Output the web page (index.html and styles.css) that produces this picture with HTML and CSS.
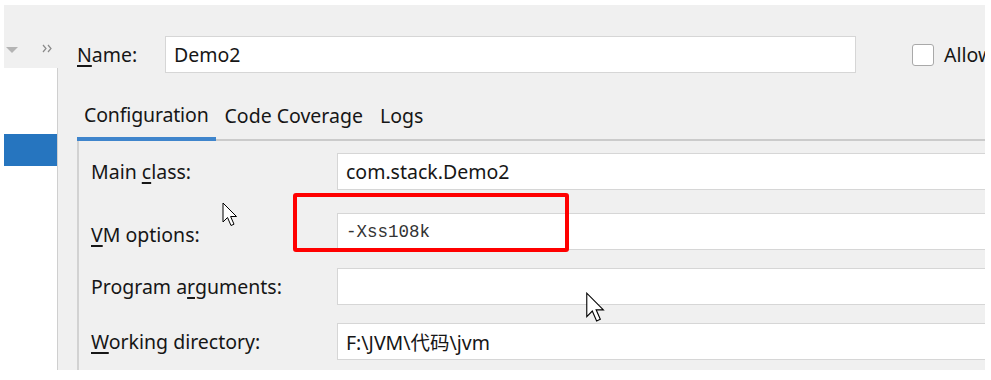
FILE: index.html
```html
<!DOCTYPE html>
<html>
<head>
<meta charset="utf-8">
<link rel="stylesheet" href="styles.css">
</head>
<body>
<div class="window">
  <div class="side">
    <div class="side-tools">
      <svg class="tri" width="12" height="7" viewBox="0 0 12 7"><path d="M0 0 H12 L6 6 Z" fill="#b4b4b4"/></svg>
      <svg class="chev" width="11" height="9" viewBox="0 0 11 9"><path d="M1 1 L4 4.5 L1 8 M6 1 L9 4.5 L6 8" fill="none" stroke="#8a8a8a" stroke-width="1.2"/></svg>
    </div>
    <div class="side-list">
      <div class="side-sel"></div>
    </div>
  </div>
  <div class="main">
    <div class="name-row">
      <label class="lbl-name"><u>N</u>ame:</label>
      <div class="field name-field">Demo2</div>
      <span class="check"></span>
      <span class="allow">Allow</span>
    </div>
    <div class="tabs">
      <div class="tab active">Configuration</div>
      <div class="tab">Code Coverage</div>
      <div class="tab">Logs</div>
    </div>
    <div class="panel">
      <div class="row first">
        <label class="lbl">Main <u>c</u>lass:</label>
        <div class="field">com.stack.Demo2</div>
      </div>
      <div class="row vm">
        <label class="lbl"><u>V</u>M options:</label>
        <div class="field mono">-Xss108k</div>
      </div>
      <div class="row">
        <label class="lbl">Program a<u>r</u>guments:</label>
        <div class="field"></div>
      </div>
      <div class="row">
        <label class="lbl"><u>W</u>orking directory:</label>
        <div class="field">F:\JVM\代码\jvm</div>
      </div>
    </div>
  </div>
</div>
<div class="highlight"></div>
<svg class="cursor c1" width="17" height="26" viewBox="0 0 17 26"><path d="M1 1 V20 L5.5 15.5 L9 23.5 L12 22.2 L8.6 14.5 L14.5 14.5 Z" fill="#fff" stroke="#000" stroke-width="1" stroke-linejoin="miter"/></svg>
<svg class="cursor c2" width="22" height="32" viewBox="0 0 17 26"><path d="M1 1 V20 L5.5 15.5 L9 23.5 L12 22.2 L8.6 14.5 L14.5 14.5 Z" fill="#fff" stroke="#000" stroke-width="0.9" stroke-linejoin="miter"/></svg>
</body>
</html>
```
FILE: styles.css
```css
html, body {
  margin: 0;
  padding: 0;
  background: #ffffff;
}
body {
  position: relative;
  width: 991px;
  height: 380px;
  overflow: hidden;
  font-family: "Noto Sans", "Noto Sans CJK SC", sans-serif;
  font-size: 19.5px;
  color: #161616;
}
.window {
  margin: 5px 6px 0 4px;
  height: 365px;
  background: #f0f0f0;
  display: flex;
  overflow: hidden;
}
.side {
  width: 54px;
  flex: none;
  display: flex;
  flex-direction: column;
}
.side-tools {
  height: 63px;
  display: flex;
  align-items: flex-start;
  padding-top: 39px;
  box-sizing: border-box;
}
.tri {
  margin-left: 2px;
  margin-top: 3px;
}
.chev {
  margin-left: 24px;
}
.side-list {
  flex: 1;
  background: #ffffff;
  border-right: 1px solid #cfcfcf;
  padding-top: 66px;
}
.side-sel {
  height: 32px;
  background: #2675bf;
}
.main {
  flex: 1;
  min-width: 0;
  padding-left: 19px;
  display: flex;
  flex-direction: column;
}
.name-row {
  margin-top: 31px;
  height: 37px;
  display: flex;
  align-items: center;
  white-space: nowrap;
}
.lbl-name {
  width: 88px;
  flex: none;
}
.field {
  height: 37px;
  box-sizing: border-box;
  background: #ffffff;
  border: 1px solid #d6d6d6;
  display: flex;
  align-items: center;
  padding-left: 8px;
  white-space: nowrap;
}
.name-field {
  width: 691px;
  flex: none;
}
.check {
  flex: none;
  width: 20px;
  height: 20px;
  border: 1px solid #a9a9a9;
  border-radius: 3px;
  background: #ffffff;
  margin-left: 56px;
}
.allow {
  margin-left: 10px;
}
.tabs {
  margin-top: 19px;
  display: flex;
  border-bottom: 2px solid #cbcbcb;
  height: 49px;
  box-sizing: border-box;
}
.tab {
  padding: 0 7px;
  height: 47px;
  box-sizing: border-box;
  display: flex;
  align-items: center;
  white-space: nowrap;
  margin-right: 3px;
}
.tab.active {
  border-bottom: 4px solid #3f85cc;
  margin-bottom: -2px;
  height: 49px;
  margin-right: 2px;
  letter-spacing: -0.15px;
}
.panel {
  flex: 1;
  border-left: 2px solid #d2d2d2;
  padding-top: 12px;
  padding-left: 12px;
  display: flex;
  flex-direction: column;
  gap: 18px;
}
.row {
  display: flex;
  align-items: center;
  height: 37px;
}
.row.vm {
  margin-top: 5px;
}
.lbl {
  width: 246px;
  flex: none;
  white-space: nowrap;
}
.row.vm .lbl {
  padding-top: 6px;
}
.row .field {
  flex: none;
  width: 700px;
}
.mono {
  font-family: "Liberation Mono", monospace;
  font-size: 17.5px;
  color: #333333;
}
u {
  text-decoration-thickness: 1.5px;
  text-underline-offset: 3px;
}
.highlight {
  position: absolute;
  left: 293px;
  top: 193px;
  width: 276px;
  height: 59px;
  box-sizing: border-box;
  border: 4px solid #ff0000;
  border-radius: 3px;
}
.cursor {
  position: absolute;
}
.c1 {
  left: 222px;
  top: 202px;
}
.c2 {
  left: 585px;
  top: 292px;
}
```
